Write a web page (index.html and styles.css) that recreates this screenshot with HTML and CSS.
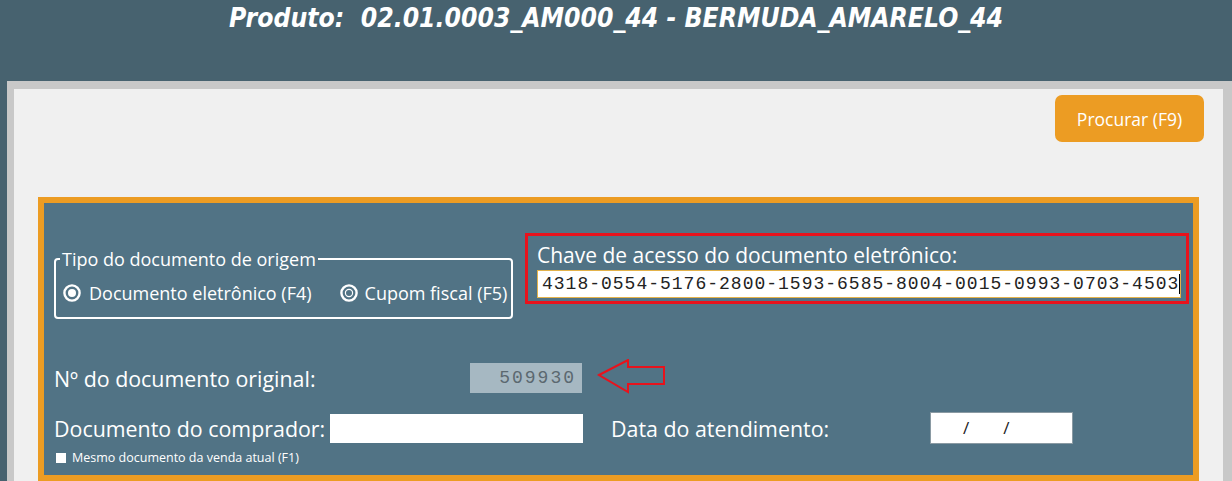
FILE: index.html
```html
<!DOCTYPE html>
<html lang="pt-BR">
<head>
    <meta charset="UTF-8">
    <meta name="viewport" content="width=device-width, initial-scale=1.0">
    <title>Devolução - Produto</title>
    <link rel="stylesheet" href="styles.css">
</head>
<body>
    <div class="topbar">
        <h1 class="title">Produto:&nbsp; 02.01.0003_AM000_44 - BERMUDA_AMARELO_44</h1>
    </div>

    <div class="frame">
        <div class="panel">
            <div class="toolbar">
                <button class="btn-search">Procurar (F9)</button>
            </div>

            <!-- Dados do documento de origem -->
            <div class="doc-box">
                <div class="row-top">
                    <fieldset class="doc-type">
                        <legend>Tipo do documento de origem</legend>
                        <div class="radios">
                            <label class="radio">
                                <svg width="18" height="18" viewBox="0 0 18 18">
                                    <circle cx="9" cy="9" r="7.6" fill="none" stroke="#fff" stroke-width="2.4"/>
                                    <circle cx="9" cy="9" r="4" fill="#fff"/>
                                </svg>
                                Documento eletrônico (F4)
                            </label>
                            <label class="radio radio-2">
                                <svg width="18" height="18" viewBox="0 0 18 18">
                                    <circle cx="9" cy="9" r="7.6" fill="none" stroke="#fff" stroke-width="2.4"/>
                                    <circle cx="9" cy="9" r="3.6" fill="none" stroke="#fff" stroke-width="1.2"/>
                                </svg>
                                Cupom fiscal (F5)
                            </label>
                        </div>
                    </fieldset>

                    <div class="key-box">
                        <div class="key-label">Chave de acesso do documento eletrônico:</div>
                        <div class="key-input"><span class="caret">4318-0554-5176-2800-1593-6585-8004-0015-0993-0703-4503</span></div>
                    </div>
                </div>

                <div class="row-number">
                    <span class="label label-number">Nº do documento original:</span>
                    <span class="readonly">509930</span>
                    <svg class="arrow" width="70" height="36" viewBox="0 0 70 36">
                        <polygon points="2,16 31,1 31,8 67,8 67,25 31,25 31,33" fill="none" stroke="#e8121c" stroke-width="2"/>
                    </svg>
                </div>

                <div class="row-buyer">
                    <span class="label label-buyer">Documento do comprador:</span>
                    <span class="text-input"></span>
                    <span class="label label-date">Data do atendimento:</span>
                    <span class="date-input"><span class="slash">/</span><span class="slash">/</span></span>
                </div>

                <label class="same-doc">
                    <span class="check"></span>
                    Mesmo documento da venda atual (F1)
                </label>
            </div>
        </div>
    </div>
</body>
</html>
```

FILE: styles.css
```css
body {
    margin: 0;
    width: 1232px;
    height: 481px;
    overflow: hidden;
    background-color: #47626f;
    font-family: "Open Sans", "Noto Sans", sans-serif;
    color: #fff;
}
.topbar {
    height: 81px;
}
.title {
    margin: 0;
    padding-top: 1px;
    text-align: center;
    font-family: "DejaVu Sans Condensed", "DejaVu Sans", sans-serif;
    font-size: 26.3px;
    font-weight: bold;
    font-style: italic;
    line-height: 34px;
    color: #fff;
}
.frame {
    margin-left: 7px;
    border-left: 7px solid #c8c8c8;
    border-top: 8px solid #c8c8c8;
    border-right: 9px solid #c8c8c8;
    height: 392px;
}
.panel {
    background-color: #f0f0f0;
    height: 100%;
    padding: 6px 24px 0;
}
.toolbar {
    display: flex;
    justify-content: flex-end;
    margin-right: -5px;
}
.btn-search {
    width: 149px;
    height: 47px;
    border: none;
    border-radius: 7px;
    background-color: #ec9c23;
    color: #fff;
    font-family: "Open Sans", "Noto Sans", sans-serif;
    font-size: 17.5px;
    padding: 0;
}
.doc-box {
    margin-top: 55px;
    border: 6px solid #ec9c23;
    background-color: #517385;
    height: 242px;
    padding: 30px 10px 0;
}
.row-top {
    display: flex;
    align-items: flex-start;
}
.doc-type {
    margin: 16px 0 0;
    width: 459px;
    min-width: 459px;
    height: 70px;
    box-sizing: border-box;
    padding: 0 4px;
    border: 2px solid #fff;
    border-radius: 4px;
}
.doc-type legend {
    padding: 0 2px;
    font-size: 18px;
    line-height: 20px;
}
.radios {
    display: flex;
    margin-top: 12px;
    margin-left: 3px;
    font-size: 18px;
    white-space: nowrap;
}
.radio {
    display: flex;
    align-items: center;
    gap: 8px;
}
.radio svg {
    flex-shrink: 0;
}
.radio-2 {
    margin-left: 28px;
    gap: 7px;
}
.key-box {
    margin-left: 12px;
    width: 666px;
    height: 71px;
    box-sizing: border-box;
    border: 3px solid #e8121c;
    padding: 7px 5px 0 9px;
}
.key-label {
    font-size: 21px;
    line-height: 25px;
}
.key-input {
    margin-top: 2px;
    height: 28px;
    box-sizing: border-box;
    border: 1px solid #e3b24a;
    background-color: #fff;
    padding-left: 4px;
    font-family: "Liberation Mono", monospace;
    font-size: 18px;
    letter-spacing: 1px;
    line-height: 26px;
    color: #222;
    white-space: nowrap;
}
.caret {
    border-right: 1px solid #000;
}
.row-number {
    display: flex;
    align-items: center;
    margin-top: 44px;
    height: 30px;
}
.label {
    font-size: 21.4px;
}
.label-number {
    width: 416px;
}
.readonly {
    width: 112px;
    height: 30px;
    box-sizing: border-box;
    padding-right: 6px;
    background-color: #a6b8c2;
    color: #5b6870;
    text-align: right;
    font-family: "Liberation Mono", monospace;
    font-size: 18px;
    letter-spacing: 2px;
    line-height: 30px;
}
.arrow {
    margin-left: 15px;
    margin-top: -2px;
}
.row-buyer {
    display: flex;
    align-items: center;
    margin-top: 19px;
    height: 32px;
}
.label-buyer {
    width: 276px;
}
.text-input {
    width: 253px;
    height: 29px;
    background-color: #fff;
}
.label-date {
    margin-left: 28px;
    width: 319px;
}
.date-input {
    width: 143px;
    height: 32px;
    box-sizing: border-box;
    border: 1px solid #8a9aa3;
    background-color: #fff;
    color: #222;
    font-size: 17px;
    line-height: 30px;
    padding-left: 32px;
}
.slash + .slash {
    margin-left: 34px;
}
.same-doc {
    display: flex;
    align-items: center;
    gap: 6px;
    margin-top: 5px;
    margin-left: 2px;
    font-size: 12.5px;
}
.check {
    width: 10px;
    height: 10px;
    background-color: #fff;
}
```
